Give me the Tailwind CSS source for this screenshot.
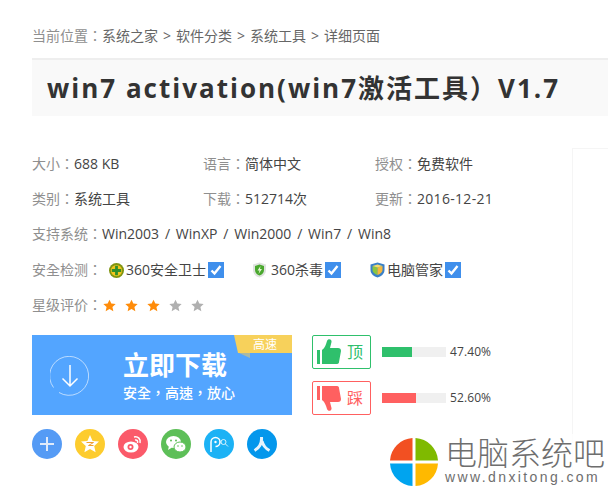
<!DOCTYPE html>
<html lang="zh-CN">
<head>
    <meta charset="UTF-8">
    <meta name="viewport" content="width=device-width, initial-scale=1.0">
    <title>win7 activation</title>
    <script src="https://cdn.jsdelivr.net/npm/@tailwindcss/browser@4"></script>
</head>
<body class="bg-white h-[486px] w-[608px] overflow-hidden relative font-['Open_Sans','Noto_Sans_CJK_SC',sans-serif] text-[14px] text-[#444]">
    <div class="pl-[32px]">
        <!-- breadcrumb -->
        <div class="pt-[26px] h-[58px] leading-[20px] text-[#666] whitespace-nowrap">
            <span lang="zh-TW" class="text-[#8f8f8f] font-['Open_Sans','Noto_Sans_CJK_TC',sans-serif]">当前位置：</span>系统之家<span class="mx-[5px]">&gt;</span>软件分类<span class="mx-[5px]">&gt;</span>系统工具<span class="mx-[5px]">&gt;</span>详细页面
        </div>

        <!-- title -->
        <div class="h-[58px] bg-[#f9f9f9] border-t-2 border-[#eeeeee] pl-[15px] flex items-center">
            <h1 class="text-[26px] font-bold tracking-[2px] text-[#333] whitespace-nowrap">win7 activation(win7激活工具）V1.7</h1>
        </div>

        <!-- info -->
        <div class="mt-[30px] leading-[20px]">
            <div class="grid grid-cols-[171px_172px_180px] h-[35px] items-center">
                <div><span lang="zh-TW" class="text-[#8f8f8f] font-['Open_Sans','Noto_Sans_CJK_TC',sans-serif]">大小：</span>688 KB</div>
                <div><span lang="zh-TW" class="text-[#8f8f8f] font-['Open_Sans','Noto_Sans_CJK_TC',sans-serif]">语言：</span>简体中文</div>
                <div><span lang="zh-TW" class="text-[#8f8f8f] font-['Open_Sans','Noto_Sans_CJK_TC',sans-serif]">授权：</span>免费软件</div>
            </div>
            <div class="grid grid-cols-[171px_172px_180px] h-[35px] items-center">
                <div><span lang="zh-TW" class="text-[#8f8f8f] font-['Open_Sans','Noto_Sans_CJK_TC',sans-serif]">类别：</span>系统工具</div>
                <div><span lang="zh-TW" class="text-[#8f8f8f] font-['Open_Sans','Noto_Sans_CJK_TC',sans-serif]">下载：</span>512714次</div>
                <div><span lang="zh-TW" class="text-[#8f8f8f] font-['Open_Sans','Noto_Sans_CJK_TC',sans-serif]">更新：</span><span class="tracking-[0.3px]">2016-12-21</span></div>
            </div>
            <div class="h-[36px] flex items-center"><span lang="zh-TW" class="text-[#8f8f8f] font-['Open_Sans','Noto_Sans_CJK_TC',sans-serif]">支持系统：</span><span class="[word-spacing:2.2px]">Win2003 / WinXP / Win2000 / Win7 / Win8</span></div>
            <div class="h-[36px] flex items-center">
                <span lang="zh-TW" class="text-[#8f8f8f] w-[77px] font-['Open_Sans','Noto_Sans_CJK_TC',sans-serif]">安全检测：</span>
                <svg class="w-[15px] h-[15px] mr-[2px]" viewBox="0 0 16 16"><circle cx="8" cy="8" r="8" fill="#7f9410"/><circle cx="8" cy="8" r="6" fill="#f2c41e"/><path d="M6.500 3h3v3.500H13v3H9.500V13h-3V9.500H3v-3h3.500z" fill="#2f8f2a"/></svg>
                <span>360安全卫士</span>
                <svg class="w-[16px] h-[16px] ml-[2px]" viewBox="0 0 16 16"><rect width="16" height="16" fill="#3f8fec"/><path d="M3.500 8.500l3 3 6-7.500" fill="none" stroke="#fff" stroke-width="2.400"/></svg>
                <svg class="w-[15px] h-[16px] ml-[28px] mr-[4px]" viewBox="0 0 15 16"><path d="M7.500 0.500L14 2.500V8c0 4-3 6.500-6.500 7.500C4 14.500 1 12 1 8V2.500z" fill="#dfe3df"/><path d="M7.500 2.500L12 4v4c0 3-2 4.800-4.500 5.500C5 12.800 3 11 3 8V4z" fill="#4aa82e"/><path d="M8.500 4L5.500 8.500h2L6.500 12l3.500-5H8z" fill="#e8f6d8"/></svg>
                <span>360杀毒</span>
                <svg class="w-[16px] h-[16px] ml-[2px]" viewBox="0 0 16 16"><rect width="16" height="16" fill="#3f8fec"/><path d="M3.500 8.500l3 3 6-7.500" fill="none" stroke="#fff" stroke-width="2.400"/></svg>
                <svg class="w-[15px] h-[16px] ml-[29px] mr-[2px]" viewBox="0 0 15 16"><path d="M7.500 0.500L14.500 2.500V8c0 4-3.500 6.500-7 7.500C4 14.500 0.500 12 0.500 8V2.500z" fill="#3a80c8"/><path d="M2.500 4l5 1.500V13C5 12 2.500 10.500 2.500 8z" fill="#8cc63f"/><path d="M12.500 4l-5 1.500V13c2.500-1 5-2.500 5-5z" fill="#f6b73c"/><path d="M2.500 4l5-1.500 5 1.500-5 1.500z" fill="#f7dd6a"/></svg>
                <span>电脑管家</span>
                <svg class="w-[16px] h-[16px] ml-[2px]" viewBox="0 0 16 16"><rect width="16" height="16" fill="#3f8fec"/><path d="M3.500 8.500l3 3 6-7.500" fill="none" stroke="#fff" stroke-width="2.400"/></svg>
            </div>
            <div class="h-[34px] flex items-center">
                <span lang="zh-TW" class="text-[#8f8f8f] w-[71px] font-['Open_Sans','Noto_Sans_CJK_TC',sans-serif]">星级评价：</span>
                <div class="flex gap-[9px]">
                    <svg class="w-[13px] h-[13px]" viewBox="0 0 20 20"><path d="M10 1l2.800 6.100 6.700.7-5 4.500 1.400 6.600L10 15.500l-5.900 3.400 1.400-6.600-5-4.500 6.700-.7z" fill="#ff8c0a"/></svg>
                    <svg class="w-[13px] h-[13px]" viewBox="0 0 20 20"><path d="M10 1l2.800 6.100 6.700.7-5 4.500 1.400 6.600L10 15.500l-5.900 3.400 1.400-6.600-5-4.500 6.700-.7z" fill="#ff8c0a"/></svg>
                    <svg class="w-[13px] h-[13px]" viewBox="0 0 20 20"><path d="M10 1l2.800 6.100 6.700.7-5 4.500 1.400 6.600L10 15.500l-5.900 3.400 1.400-6.600-5-4.500 6.700-.7z" fill="#ff8c0a"/></svg>
                    <svg class="w-[13px] h-[13px]" viewBox="0 0 20 20"><path d="M10 1l2.800 6.100 6.700.7-5 4.500 1.400 6.600L10 15.500l-5.900 3.400 1.400-6.600-5-4.500 6.700-.7z" fill="#b0b0b0"/></svg>
                    <svg class="w-[13px] h-[13px]" viewBox="0 0 20 20"><path d="M10 1l2.800 6.100 6.700.7-5 4.500 1.400 6.600L10 15.500l-5.900 3.400 1.400-6.600-5-4.500 6.700-.7z" fill="#b0b0b0"/></svg>
                </div>
            </div>
        </div>

        <!-- download and votes -->
        <div class="mt-[13px] flex">
            <div class="relative w-[260px] h-[80px] bg-[#53a5ff] text-white flex items-center">
                <svg class="w-[40px] h-[40px] ml-[18px] mt-[2px]" viewBox="0 0 40 40" fill="none" stroke="#fff"><path d="M3.500 31.500A19.500 19.500 0 1 1 9 36.500" stroke-opacity=".6" stroke-width="1"/><path d="M20 9v21M12.500 22.500L20 30l7.500-7.500" stroke-width="1.500"/></svg>
                <div class="ml-[33px]">
                    <div class="text-[26px] font-bold leading-[32px] mt-[2px]">立即下载</div>
                    <div lang="zh-TW" class="text-[14px] font-medium leading-[20px] mt-[2px] font-['Open_Sans','Noto_Sans_CJK_TC',sans-serif]">安全，高速，放心</div>
                </div>
                <svg class="absolute top-0 right-0" width="58" height="24" viewBox="0 0 58 24"><path d="M5 18l11 5V18z" fill="#a9b9a6"/><path d="M0 0h58v18H4z" fill="#f7d15b"/></svg>
                <span class="absolute top-0 right-[5px] w-[44px] text-center text-[12px] leading-[20px] text-white">高速</span>
            </div>

            <div class="ml-[20px] flex flex-col gap-[12px]">
                <div class="flex items-center">
                    <div class="w-[59px] h-[34px] border border-[#2fc06c] rounded-[2px] flex items-center pl-[4px]">
                        <svg class="w-[24px] h-[26px]" viewBox="0 0 24 26"><path d="M0 11h3v14H0z" fill="#2fc06c"/><path d="M5 11c3-2 4-6 5-9 1-3 5-2 4.500 1L13 9h8c2 0 3 1 3 3l-2 11c0 1.500-1 2-3 2H5z" fill="#2fc06c"/></svg>
                        <span class="ml-[6px] text-[16px] text-[#2fc06c]">顶</span>
                    </div>
                    <div class="ml-[11px] w-[64px] h-[10px] bg-[#f0f0f0]"><div class="h-full bg-[#2fc06c]" style="width:47.4%"></div></div>
                    <span class="ml-[4px] text-[12px] tracking-[0.1px]">47.40%</span>
                </div>
                <div class="flex items-center">
                    <div class="w-[59px] h-[34px] border border-[#ff6060] rounded-[2px] flex items-center pl-[4px]">
                        <svg class="w-[24px] h-[26px]" viewBox="0 0 24 26"><path d="M0 1h3v14H0z" fill="#ff6060"/><path d="M5 15c3 2 4 6 5 9 1 3 5 2 4.500-1L13 17h8c2 0 3-1 3-3L22 3c0-1.500-1-2-3-2H5z" fill="#ff6060"/></svg>
                        <span class="ml-[6px] text-[16px] text-[#ff6060]">踩</span>
                    </div>
                    <div class="ml-[11px] w-[64px] h-[10px] bg-[#f0f0f0]"><div class="h-full bg-[#ff6060]" style="width:52.6%"></div></div>
                    <span class="ml-[4px] text-[12px] tracking-[0.1px]">52.60%</span>
                </div>
            </div>
        </div>

        <!-- share -->
        <div class="mt-[14px] flex gap-[13px]">
            <div class="w-[30px] h-[30px] rounded-full bg-[#559bf5] flex items-center justify-center">
                <svg class="w-[16px] h-[16px]" viewBox="0 0 16 16"><path d="M7 1h2v14H7zM1 7h14v2H1z" fill="#dfeafa"/></svg>
            </div>
            <div class="w-[30px] h-[30px] rounded-full bg-[#fdcc2e] flex items-center justify-center">
                <svg class="w-[20px] h-[20px]" viewBox="0 0 20 20"><path d="M10 1l2.600 6 6.400.6-4.800 4.300 1.400 6.400L10 15l-5.600 3.300 1.400-6.400L1 7.600 7.400 7z" fill="#fff"/><path d="M6.500 8.500h7l-5 3h5" fill="none" stroke="#f0a030" stroke-width="1"/></svg>
            </div>
            <div class="w-[30px] h-[30px] rounded-full bg-[#fb5a6a] flex items-center justify-center">
                <svg class="w-[22px] h-[20px]" viewBox="0 0 22 20"><ellipse cx="9" cy="13" rx="7.500" ry="5.500" fill="#fff"/><circle cx="8.500" cy="13" r="3" fill="#fb5a6a"/><circle cx="8.500" cy="13" r="1.200" fill="#fff"/><path d="M12 3c4-1 7 2 6 6M13 6c2-.5 3 1 2.500 3" fill="none" stroke="#fff" stroke-width="1.500"/></svg>
            </div>
            <div class="w-[30px] h-[30px] rounded-full bg-[#5dbf58] flex items-center justify-center">
                <svg class="w-[22px] h-[20px]" viewBox="0 0 22 20"><ellipse cx="8.500" cy="8" rx="7.500" ry="6" fill="#fff"/><path d="M4 12l-1 4 4-2.500z" fill="#fff"/><ellipse cx="15" cy="13" rx="6" ry="5" fill="#fff" stroke="#5dbf58"/><circle cx="6" cy="6.500" r="1" fill="#5dbf58"/><circle cx="11" cy="6.500" r="1" fill="#5dbf58"/><circle cx="13" cy="12" r=".8" fill="#5dbf58"/><circle cx="17" cy="12" r=".8" fill="#5dbf58"/></svg>
            </div>
            <div class="w-[30px] h-[30px] rounded-full bg-[#1cb2f5] flex items-center justify-center">
                <svg class="w-[22px] h-[20px]" viewBox="0 0 22 20" fill="none" stroke="#fff"><path d="M3 18V8a4.500 4.500 0 1 1 4.500 4.500" stroke-width="1.500"/><circle cx="7.500" cy="8" r="1.200" fill="#fff" stroke="none"/><circle cx="15.500" cy="8" r="2.500" stroke-width="1" stroke-opacity=".8"/><path d="M17.500 10l2.500 2.500" stroke-width="1" stroke-opacity=".8"/></svg>
            </div>
            <div class="w-[30px] h-[30px] rounded-full bg-[#0497ec] flex items-center justify-center">
                <svg class="w-[20px] h-[20px]" viewBox="0 0 20 20" fill="none" stroke="#e8f4fd" stroke-width="3"><path d="M9.500 3C10 9 7 14 2.500 16.500M10 7c1 4 3.500 7.500 7.500 9.500"/></svg>
            </div>
        </div>
    </div>

    <!-- sidebar edge -->
    <div class="absolute left-[572px] top-[148px] w-[36px] h-[338px] border-l border-t border-[#f5f5f5]"></div>

    <!-- watermark -->
    <div class="absolute left-[389px] top-[434px] w-[219px] h-[52px] flex bg-white/80">
        <svg class="w-[50px] h-[50px] mt-[3px]" viewBox="0 0 50 50">
            <path d="M23.500 1A24 24 0 0 0 1 23.500h22.500z" fill="#f25022"/>
            <path d="M26.500 1A24 24 0 0 1 49 23.500H26.500z" fill="#7fba00"/>
            <path d="M23.500 49A24 24 0 0 1 1 26.500h22.500z" fill="#00a4ef"/>
            <path d="M26.500 49A24 24 0 0 0 49 26.500H26.500z" fill="#ffb900"/>
        </svg>
        <div class="ml-[6px] text-[#6e6e6e]">
            <div class="text-[32px] leading-[38px] font-light whitespace-nowrap">电脑系统吧</div>
            <div class="text-[14px] leading-[14px] -mt-[2px] tracking-[2.400px] whitespace-nowrap font-['Liberation_Sans',sans-serif]">www.dnxitong.com</div>
        </div>
    </div>
</body>
</html>
